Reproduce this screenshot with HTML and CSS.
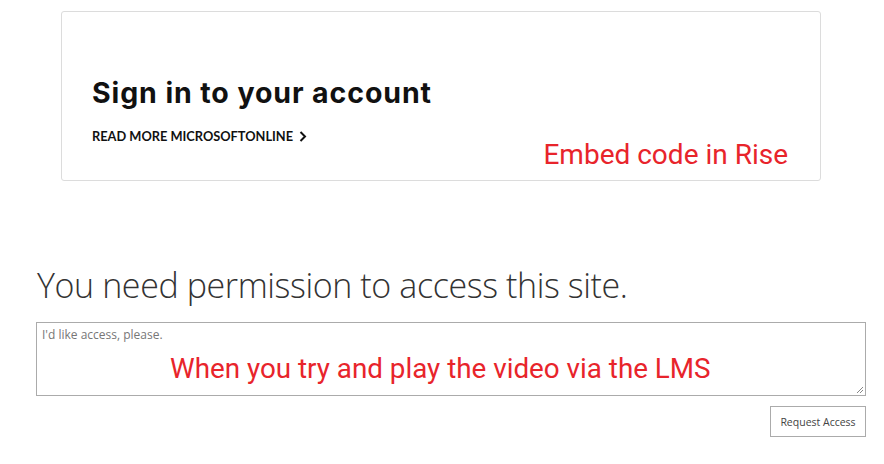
FILE: index.html
```html
<!DOCTYPE html>
<html>
<head>
<meta charset="utf-8">
<link rel="stylesheet" href="styles.css">
</head>
<body>
<div class="page">
  <section class="card">
    <h2 class="card-title">Sign in to your account</h2>
    <a class="card-link" href="#">READ MORE MICROSOFTONLINE
      <svg class="chev" width="8" height="11" viewBox="0 0 8 11"><path d="M1.5 1 L6 5.5 L1.5 10" fill="none" stroke="#111" stroke-width="2"/></svg>
    </a>
    <div class="card-note">Embed code in Rise</div>
  </section>

  <section class="perm">
    <h1 class="perm-title">You need permission to access this site.</h1>
    <div class="box">
      <div class="placeholder">I'd like access, please.</div>
      <div class="box-note">When you try and play the video via the LMS</div>
      <svg class="grip" width="10" height="10" viewBox="0 0 10 10"><path d="M9 3 L3 9 M9 6 L6 9" stroke="#888" stroke-width="1"/></svg>
    </div>
    <div class="actions">
      <button class="btn">Request Access</button>
    </div>
  </section>
</div>
</body>
</html>
```
FILE: styles.css
```css
html, body { margin: 0; padding: 0; background: #fff; }
.page { width: 884px; height: 464px; overflow: hidden; }

.card {
  margin: 11px 0 0 61px;
  width: 760px;
  height: 170px;
  border: 1px solid #dcdcdc;
  border-radius: 3px;
  padding: 0 0 0 30px;
  box-sizing: border-box;
  display: flex;
  flex-direction: column;
}
.card-title {
  margin: 64px 0 0 0;
  font-family: "Inter", sans-serif;
  font-weight: 700;
  font-size: 28.5px;
  line-height: 34px;
  color: #111;
  letter-spacing: 0.9px;
}
.card-link {
  margin-top: 18px;
  font-family: "Lato", sans-serif;
  font-weight: 700;
  font-size: 12.8px;
  line-height: 16px;
  color: #111;
  text-decoration: none;
  display: flex;
  align-items: center;
  gap: 6px;
}
.chev { display: block; }
.card-note {
  align-self: flex-end;
  margin: 0 32px 0 0;
  font-family: "Roboto", sans-serif;
  font-size: 28px;
  line-height: 32px;
  color: #e8242b;
  position: relative;
  top: -5px;
}

.perm { margin: 82px 0 0 36px; width: 830px; }
.perm-title {
  margin: 0 0 0 1px;
  font-family: "Open Sans", sans-serif;
  font-weight: 300;
  font-size: 34px;
  line-height: 44px;
  letter-spacing: -0.4px;
  color: #333;
}
.box {
  margin-top: 15px;
  height: 74px;
  border: 1px solid #ababab;
  position: relative;
  padding: 5px 5px 0 5px;
  box-sizing: border-box;
}
.placeholder {
  font-family: "Open Sans", sans-serif;
  font-size: 12px;
  line-height: 14px;
  color: #777;
}
.box-note {
  margin: 10px 0 0 128px;
  font-family: "Roboto", sans-serif;
  font-size: 27.8px;
  line-height: 34px;
  color: #e8242b;
}
.grip { position: absolute; right: 1px; bottom: 1px; }
.actions { display: flex; justify-content: flex-end; margin-top: 10px; }
.btn {
  width: 96px;
  height: 31px;
  border: 1px solid #ababab;
  background: #fff;
  font-family: "Open Sans", sans-serif;
  font-size: 10.5px;
  color: #444;
  padding: 0;
}
```
